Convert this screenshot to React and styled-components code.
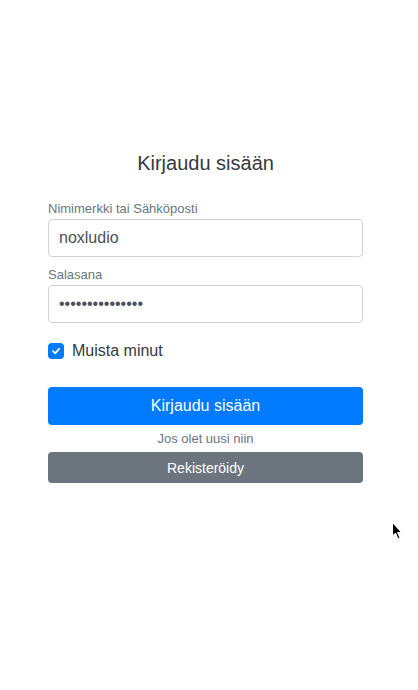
import React from "react";
import styled, { createGlobalStyle } from "styled-components";

const Global = createGlobalStyle`
  * { box-sizing: border-box; }
  html, body { margin: 0; padding: 0; background: #fff; }
  body { font-family: "Liberation Sans", Arial, sans-serif; color: #212529; }
`;

const Page = styled.div`
  position: relative;
  width: 418px;
  height: 690px;
  padding-top: 149px;
  padding-left: 48px;
`;

const Form = styled.form`
  width: 315px;
  display: flex;
  flex-direction: column;
`;

const Title = styled.h1`
  margin: 0 0 20px;
  font-size: 20px;
  line-height: 29px;
  font-weight: 400;
  color: #343a40;
  text-align: center;
`;

const Group = styled.div`
  display: flex;
  flex-direction: column;
  margin-bottom: ${(p) => p.$mb ?? 7}px;
`;

const Label = styled.label`
  font-size: 13px;
  line-height: 21px;
  color: #6c757d;
`;

const Input = styled.input`
  height: 38px;
  width: 100%;
  padding: 6px 10px;
  font-family: inherit;
  font-size: 16px;
  color: #495057;
  border: 1px solid #ced4da;
  border-radius: 4px;
  background: #fff;
  outline: none;
`;

const CheckRow = styled.label`
  display: flex;
  align-items: center;
  gap: 8px;
  height: 16px;
  margin: 20px 0 28px;
  font-size: 16px;
  color: #343a40;
`;

const Box = styled.span`
  width: 16px;
  height: 16px;
  border-radius: 4px;
  background: #007bff;
  display: flex;
  align-items: center;
  justify-content: center;
`;

const Button = styled.button`
  width: 100%;
  height: ${(p) => (p.$small ? 31 : 38)}px;
  border: none;
  border-radius: 4px;
  font-family: inherit;
  font-size: ${(p) => (p.$small ? 14 : 16)}px;
  color: #fff;
  background: ${(p) => (p.$variant === "secondary" ? "#6c757d" : "#007bff")};
  cursor: pointer;
  padding: 0;
`;

const Note = styled.p`
  margin: 4px 0 4px;
  font-size: 13px;
  line-height: 19px;
  text-align: center;
  color: #6c757d;
`;

const Cursor = styled.svg`
  position: absolute;
  left: 392px;
  top: 522px;
`;

export default function App() {
  return (
    <>
      <Global />
      <Page>
        <Form onSubmit={(e) => e.preventDefault()}>
          <Title>Kirjaudu sisään</Title>
          <Group>
            <Label>Nimimerkki tai Sähköposti</Label>
            <Input type="text" defaultValue="noxludio" />
          </Group>
          <Group $mb={0}>
            <Label>Salasana</Label>
            <Input type="password" defaultValue="noxludio1234567" />
          </Group>
          <CheckRow>
            <Box>
              <svg width="10" height="10" viewBox="0 0 10 10">
                <path d="M2 5.2 L4.2 7.3 L8 2.8" fill="none" stroke="#fff" strokeWidth="1.8" strokeLinecap="round" strokeLinejoin="round" />
              </svg>
            </Box>
            Muista minut
          </CheckRow>
          <Button type="submit">Kirjaudu sisään</Button>
          <Note>Jos olet uusi niin</Note>
          <Button type="button" $small $variant="secondary">Rekisteröidy</Button>
        </Form>
        <Cursor width="12" height="20" viewBox="0 0 12 20">
          <path d="M0.5 0.5 L0.5 14 L3.5 11 L6 17 L8 16 L5.5 10.5 L9.5 10.5 Z" fill="#000" stroke="#fff" strokeWidth="1" />
        </Cursor>
      </Page>
    </>
  );
}
